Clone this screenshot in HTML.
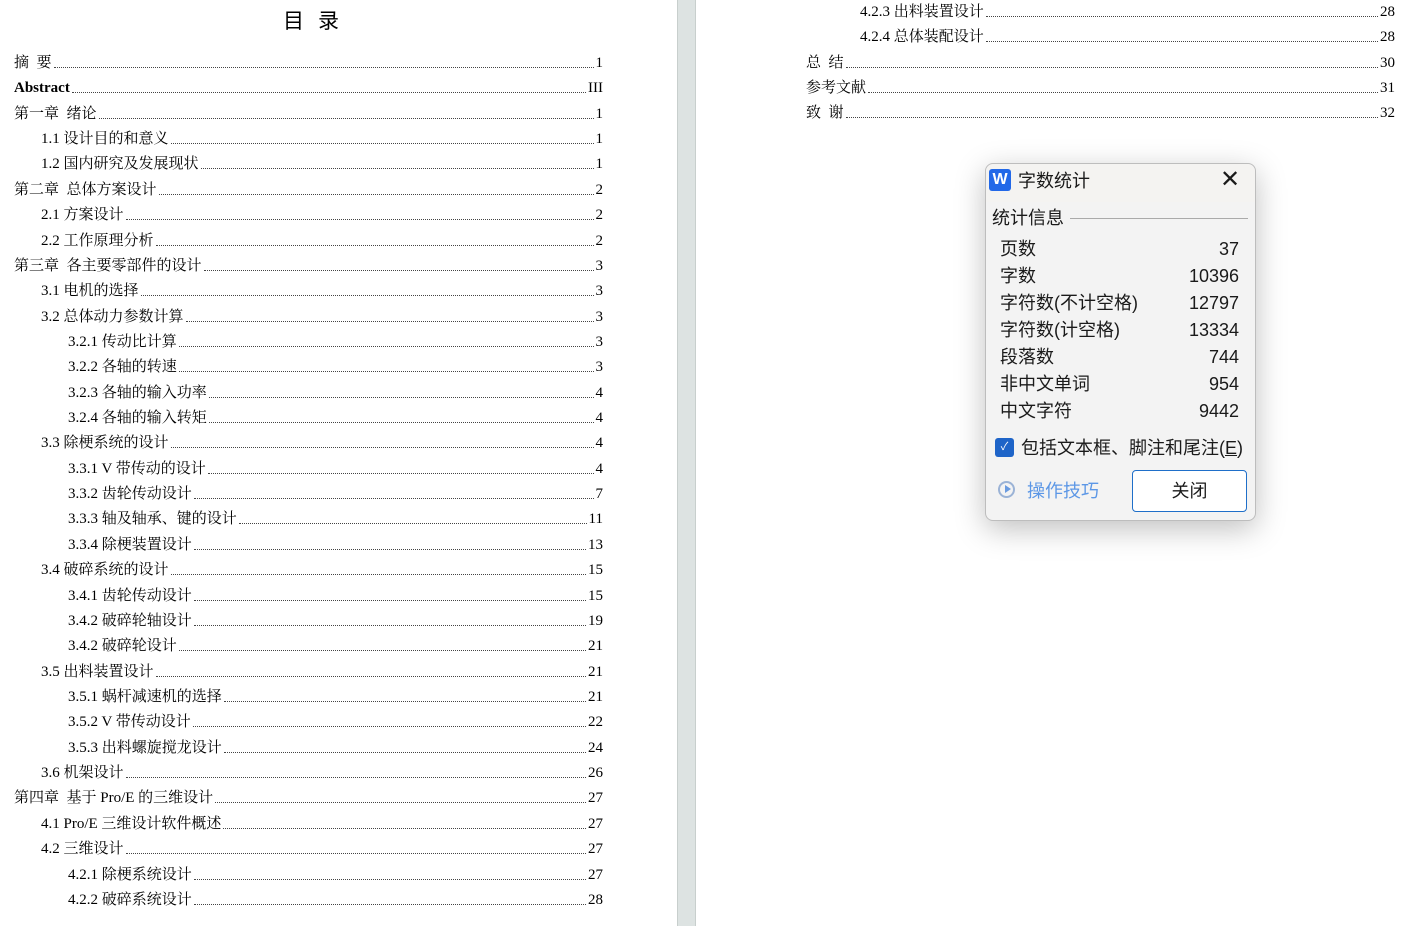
<!DOCTYPE html>
<html><head><meta charset="utf-8"><style>
body{margin:0;width:1405px;height:926px;background:#fff;position:relative;overflow:hidden;font-family:"Liberation Serif","Noto Serif CJK SC",serif;}
.r{position:absolute;height:20px;display:flex;align-items:flex-end;font-size:15px;color:#000;line-height:20px;}
.r .t{white-space:nowrap;}
.r .d{flex:1;border-bottom:1px dotted #444;margin:0 2px 5px 2px;}
.r .p{white-space:nowrap;}
.gap{position:absolute;left:677px;top:0;width:19px;height:926px;background:#dde3e2;border-left:1px solid #c8cfcd;border-right:1px solid #c8cfcd;box-sizing:border-box;}
.title{position:absolute;left:283px;top:5px;font-size:21px;font-family:"Liberation Sans","Noto Sans CJK SC",sans-serif;letter-spacing:14px;}
.dlg{position:absolute;left:985px;top:163px;width:271px;height:358px;background:#f3f3f3;border:1px solid #bdbdbd;border-radius:8px;box-shadow:0 8px 30px rgba(0,0,0,.25);font-family:"Liberation Sans","Noto Sans CJK SC",sans-serif;color:#1a1a1a;box-sizing:border-box;}
.dlg .a{position:absolute;font-size:18px;line-height:22px;white-space:nowrap;}
</style></head><body>
<div class="title">目录</div>
<div class="gap"></div>
<div id="L"></div>
<div class="dlg">
 <div style="position:absolute;left:0;top:0;width:269px;height:38px;background:#f4f3f1;border-radius:8px 8px 0 0"></div>
 <div style="position:absolute;left:3px;top:5px;width:22px;height:22px;background:#2268e8;border-radius:3px;color:#fff;font:bold 16px 'Liberation Sans',sans-serif;text-align:center;line-height:22px">W</div>
 <div class="a" style="left:32px;top:6px">字数统计</div>
 <div class="a" style="left:234px;top:5px;font-size:24px;font-weight:300">✕</div>
 <div class="a" style="left:6px;top:43px">统计信息</div>
 <div style="position:absolute;left:84px;top:54px;width:178px;height:1px;background:#aaa"></div>
 <div class="a" style="left:14px;top:74px">页数</div><div class="a" style="right:16px;top:74px">37</div>
 <div class="a" style="left:14px;top:101px">字数</div><div class="a" style="right:16px;top:101px">10396</div>
 <div class="a" style="left:14px;top:128px">字符数(不计空格)</div><div class="a" style="right:16px;top:128px">12797</div>
 <div class="a" style="left:14px;top:155px">字符数(计空格)</div><div class="a" style="right:16px;top:155px">13334</div>
 <div class="a" style="left:14px;top:182px">段落数</div><div class="a" style="right:16px;top:182px">744</div>
 <div class="a" style="left:14px;top:209px">非中文单词</div><div class="a" style="right:16px;top:209px">954</div>
 <div class="a" style="left:14px;top:236px">中文字符</div><div class="a" style="right:16px;top:236px">9442</div>
 <div style="position:absolute;left:9px;top:274px;width:19px;height:19px;background:#1e64c8;border-radius:3px;color:#fff;font-size:11px;text-align:center;line-height:19px">✓</div>
 <div class="a" style="left:35px;top:273px">包括文本框、脚注和尾注(<u>E</u>)</div>
 <div style="position:absolute;left:12px;top:317px;width:17px;height:17px;border:2px solid #9bb3d6;border-radius:50%;box-sizing:border-box"></div>
 <div style="position:absolute;left:19px;top:321px;width:0;height:0;border-left:6px solid #6a9be0;border-top:4px solid transparent;border-bottom:4px solid transparent"></div>
 <div class="a" style="left:41px;top:316px;color:#5c97e6">操作技巧</div>
 <div style="position:absolute;left:146px;top:306px;width:115px;height:42px;background:#fff;border:1px solid #1f6fc9;border-radius:4px;box-sizing:border-box;text-align:center;line-height:40px;font-size:18px">关闭</div>
</div>
<script>
var L=[
[0,"摘&nbsp;&nbsp;要","1"],[0,"<b>Abstract</b>","III"],[0,"第一章&nbsp;&nbsp;绪论","1"],[1,"1.1 设计目的和意义","1"],[1,"1.2 国内研究及发展现状","1"],
[0,"第二章&nbsp;&nbsp;总体方案设计","2"],[1,"2.1 方案设计","2"],[1,"2.2 工作原理分析","2"],[0,"第三章&nbsp;&nbsp;各主要零部件的设计","3"],
[1,"3.1 电机的选择","3"],[1,"3.2 总体动力参数计算","3"],[2,"3.2.1 传动比计算","3"],[2,"3.2.2 各轴的转速","3"],[2,"3.2.3 各轴的输入功率","4"],[2,"3.2.4 各轴的输入转矩","4"],
[1,"3.3 除梗系统的设计","4"],[2,"3.3.1 V 带传动的设计","4"],[2,"3.3.2 齿轮传动设计","7"],[2,"3.3.3 轴及轴承、键的设计","11"],[2,"3.3.4 除梗装置设计","13"],
[1,"3.4 破碎系统的设计","15"],[2,"3.4.1 齿轮传动设计","15"],[2,"3.4.2 破碎轮轴设计","19"],[2,"3.4.2 破碎轮设计","21"],
[1,"3.5 出料装置设计","21"],[2,"3.5.1 蜗杆减速机的选择","21"],[2,"3.5.2 V 带传动设计","22"],[2,"3.5.3 出料螺旋搅龙设计","24"],
[1,"3.6 机架设计","26"],[0,"第四章&nbsp;&nbsp;基于 Pro/E 的三维设计","27"],[1,"4.1 Pro/E 三维设计软件概述","27"],[1,"4.2 三维设计","27"],[2,"4.2.1 除梗系统设计","27"],[2,"4.2.2 破碎系统设计","28"]];
var R=[[2,"4.2.3 出料装置设计","28"],[2,"4.2.4 总体装配设计","28"],[0,"总&nbsp;&nbsp;结","30"],[0,"参考文献","31"],[0,"致&nbsp;&nbsp;谢","32"]];
var h="";
L.forEach(function(e,i){var y=53+i*25.36,x=14+e[0]*27;h+='<div class="r" style="left:'+x+'px;top:'+y+'px;width:'+(603-x)+'px"><span class="t">'+e[1]+'</span><span class="d"></span><span class="p">'+e[2]+'</span></div>';});
R.forEach(function(e,i){var y=2+i*25.36,x=806+e[0]*27;h+='<div class="r" style="left:'+x+'px;top:'+y+'px;width:'+(1395-x)+'px"><span class="t">'+e[1]+'</span><span class="d"></span><span class="p">'+e[2]+'</span></div>';});
document.getElementById("L").innerHTML=h;
</script>
</body></html>
